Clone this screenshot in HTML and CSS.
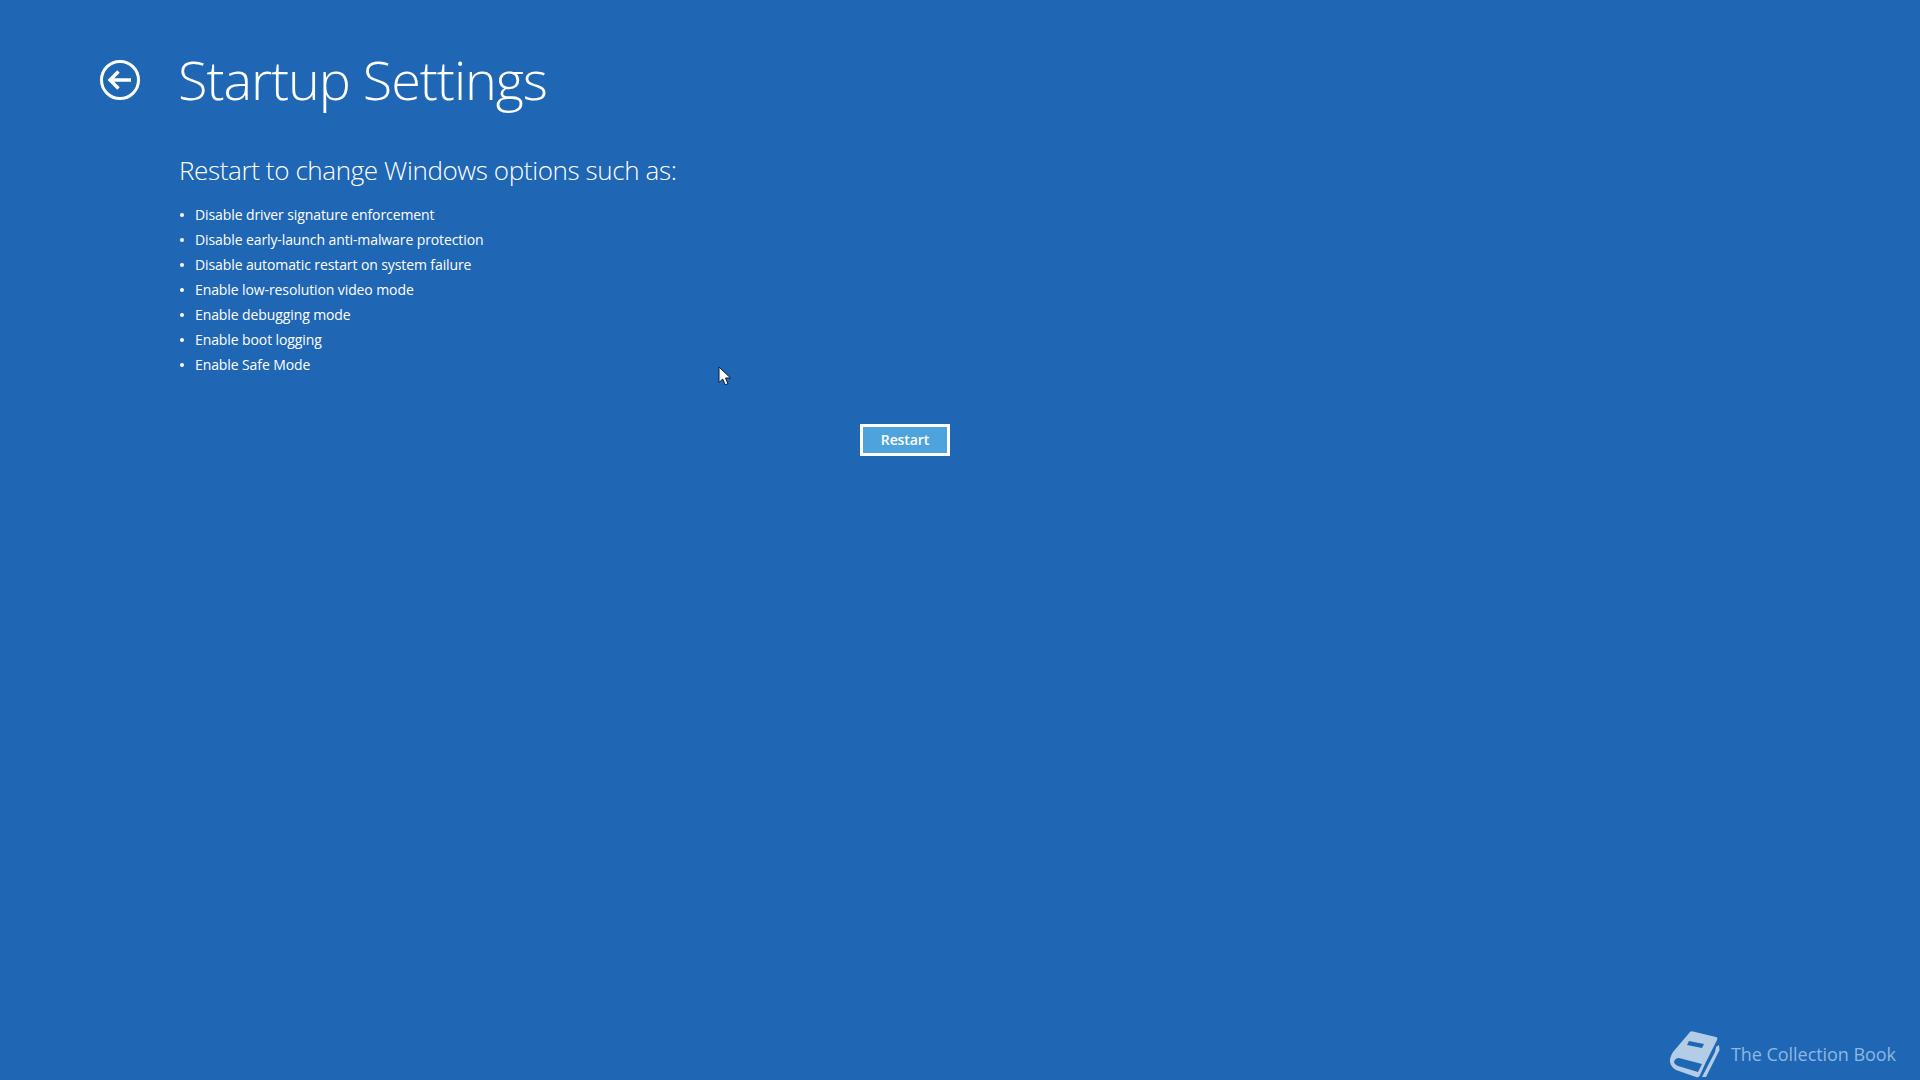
FILE: index.html
```html
<!DOCTYPE html>
<html lang="en">
<head>
<meta charset="utf-8">
<title>Startup Settings</title>
<link rel="stylesheet" href="styles.css">
</head>
<body>
<main class="page">
  <header class="header">
    <svg class="back" viewBox="0 0 40 40" aria-hidden="true">
      <circle cx="20" cy="20" r="18.500" fill="none" stroke="#fff" stroke-width="3"/>
      <path d="M31 20H10M18.500 11.500L10 20l8.500 8.500" fill="none" stroke="#fff" stroke-width="3.400"/>
    </svg>
    <h1 class="title">Startup Settings</h1>
  </header>
  <section class="content">
    <h2 class="subtitle">Restart to change Windows options such as:</h2>
    <ul class="options">
      <li>Disable driver signature enforcement</li>
      <li>Disable early-launch anti-malware protection</li>
      <li>Disable automatic restart on system failure</li>
      <li>Enable low-resolution video mode</li>
      <li>Enable debugging mode</li>
      <li>Enable boot logging</li>
      <li>Enable Safe Mode</li>
    </ul>
    <div class="actions"><button class="restart" type="button">Restart</button></div>
  </section>
</main>
<svg class="cursor" viewBox="0 0 13 20" aria-hidden="true">
  <path d="M1 1v15.500l3.700-3.500 2.500 5.800 2.800-1.200-2.500-5.600h5z" fill="#fff" stroke="#0b1a33" stroke-width="1"/>
</svg>
<div class="watermark">
  <svg class="book" viewBox="0 0 52 48" aria-hidden="true">
    <path fill="#b4cde6" fill-rule="evenodd" d="M21 1Q22 0 24 0.500L47 6Q49 6.500 48 9L36 33 31 44Q30 47 27 46L7 39Q0 35 1 28 2 24 4 21ZM20 10 35 13 33 17 18 14ZM10 27 33 33 29 41 9 35Q5 33 5 31 6 27 10 27Z"/>
    <path fill="#b4cde6" d="M47 16 50 14 50.500 19 37 46 33 46 46 21Z"/>
  </svg>
  <span class="brand">The Collection Book</span>
</div>
</body>
</html>
```
FILE: styles.css
```css
html, body { margin: 0; height: 100%; }
body {
  background: #1f66b4;
  color: #fff;
  font-family: "Open Sans", "Noto Sans", sans-serif;
  overflow: hidden;
}
.page { display: flex; flex-direction: column; padding: 40px 0 0 100px; }
.header { display: flex; align-items: center; gap: 38px; height: 78px; }
.back { width: 40px; height: 40px; flex: none; margin-top: 2px; }
.title { margin: 0; font-weight: 300; font-size: 54px; line-height: 78px; letter-spacing: -1.05px; }
.content { margin: 34px 0 0 79px; display: flex; flex-direction: column; }
.subtitle { margin: 0; font-weight: 300; font-size: 26px; line-height: 36px; letter-spacing: -0.38px; }
.options { list-style: none; margin: 14px 0 0; padding: 0; font-size: 14px; line-height: 25px; letter-spacing: -0.1px; }
.options li { display: flex; align-items: center; gap: 11px; }
.options li::before { content: ""; width: 4.500px; height: 4.500px; border-radius: 50%; background: #fff; margin: 1px 0 0 0.500px; flex: none; }
.actions { margin: 47px 0 0 681px; }
.restart {
  width: 90px; height: 32px; padding: 0 0 2px; display: block;
  background: #4fa3dc; border: 3px solid #fff; color: #fff;
  font-family: inherit; font-size: 14px; font-weight: 600; letter-spacing: -0.1px;
}
.cursor { position: absolute; left: 718px; top: 366px; width: 13px; height: 20px; }
.watermark { position: absolute; right: 24px; bottom: 0; display: flex; align-items: center; gap: 10px; height: 48px; }
.book { width: 52px; height: 48px; margin-bottom: 2px; }
.brand { font-size: 18px; color: #8db8e2; letter-spacing: -0.05px; margin-bottom: 4px; }
```
